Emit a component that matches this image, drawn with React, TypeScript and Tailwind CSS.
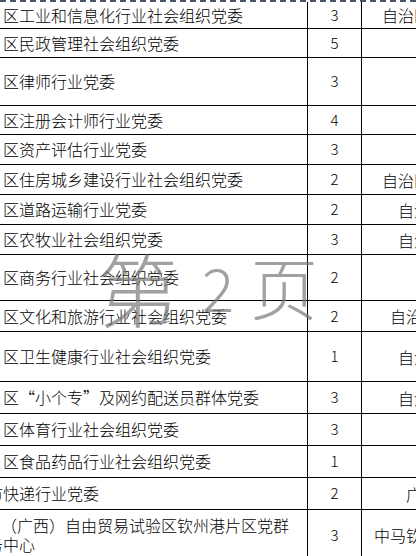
const rows: { name: string; count: number; unit: string; h: string; lead?: string }[] = [
  { name: "区工业和信息化行业社会组织党委", count: 3, unit: "自治区工业和信息化厅", h: "h-[27px]" },
  { name: "区民政管理社会组织党委", count: 5, unit: "自治区民政厅", h: "h-[29px]" },
  { name: "区律师行业党委", count: 3, unit: "自治区司法厅", h: "h-[48px]" },
  { name: "区注册会计师行业党委", count: 4, unit: "自治区财政厅", h: "h-[29px]" },
  { name: "区资产评估行业党委", count: 3, unit: "自治区财政厅", h: "h-[30px]" },
  { name: "区住房城乡建设行业社会组织党委", count: 2, unit: "自治区住房城乡建设厅", h: "h-[30px]" },
  { name: "区道路运输行业党委", count: 2, unit: "自治区交通运输厅", h: "h-[30px]" },
  { name: "区农牧业社会组织党委", count: 3, unit: "自治区农业农村厅", h: "h-[30px]" },
  { name: "区商务行业社会组织党委", count: 2, unit: "自治区商务厅", h: "h-[46px]" },
  { name: "区文化和旅游行业社会组织党委", count: 2, unit: "自治区文化和旅游厅", h: "h-[31px]" },
  { name: "区卫生健康行业社会组织党委", count: 1, unit: "自治区卫生健康委", h: "h-[50px]" },
  { name: "区“小个专”及网约配送员群体党委", count: 3, unit: "自治区市场监管局", h: "h-[32px]" },
  { name: "区体育行业社会组织党委", count: 3, unit: "自治区体育局", h: "h-[32px]" },
  { name: "区食品药品行业社会组织党委", count: 1, unit: "自治区药监局", h: "h-[32px]" },
  { name: "快递行业党委", lead: "市", count: 2, unit: "广西邮政管理局", h: "h-[32px]" },
];

const font = { fontFamily: '"Noto Sans CJK SC", "Liberation Sans", sans-serif' };

function Row({ children, count, unit, h }: { children: React.ReactNode; count: number; unit: string; h: string }) {
  return (
    <div className={`flex shrink-0 border-b border-black ${h}`}>
      <div className="flex w-[308px] shrink-0 items-center overflow-hidden border-r border-black pl-[3px] text-[16px] leading-[19px] whitespace-nowrap">
        {children}
      </div>
      <div className="flex w-[54px] shrink-0 items-center justify-center border-r border-black text-[15px]">
        {count}
      </div>
      <div className="flex w-[200px] shrink-0 items-center justify-center text-[16px] whitespace-nowrap">
        {unit}
      </div>
    </div>
  );
}

export default function App() {
  return (
    <div className="relative h-[556px] w-[416px] overflow-hidden bg-white font-light text-black" style={font}>
      <div className="flex flex-col border-t-2 border-dashed border-[#4b5563]">
        {rows.map((r) => (
          <Row key={r.name} count={r.count} unit={r.unit} h={r.h}>
            {r.lead ? (
              <span className="-ml-[16px]">
                {r.lead}
                {r.name}
              </span>
            ) : (
              <span>{r.name}</span>
            )}
          </Row>
        ))}
        <Row count={3} unit="中马钦州产业园区管委会" h="h-[51px]">
          <div className="flex flex-col">
            <span className="-ml-[2px]">（广西）自由贸易试验区钦州港片区党群</span>
            <span className="-ml-[16px]">务中心</span>
          </div>
        </Row>
      </div>

      {/* page watermark */}
      <div className="pointer-events-none absolute left-[98px] top-[246px] flex items-center text-[#7a7a7a] opacity-70">
        <span className="text-[80px] leading-none">第</span>
        <span className="ml-[24px] text-[60px] leading-none">2</span>
        <span className="ml-[16px] text-[68px] leading-none">页</span>
      </div>
    </div>
  );
}
